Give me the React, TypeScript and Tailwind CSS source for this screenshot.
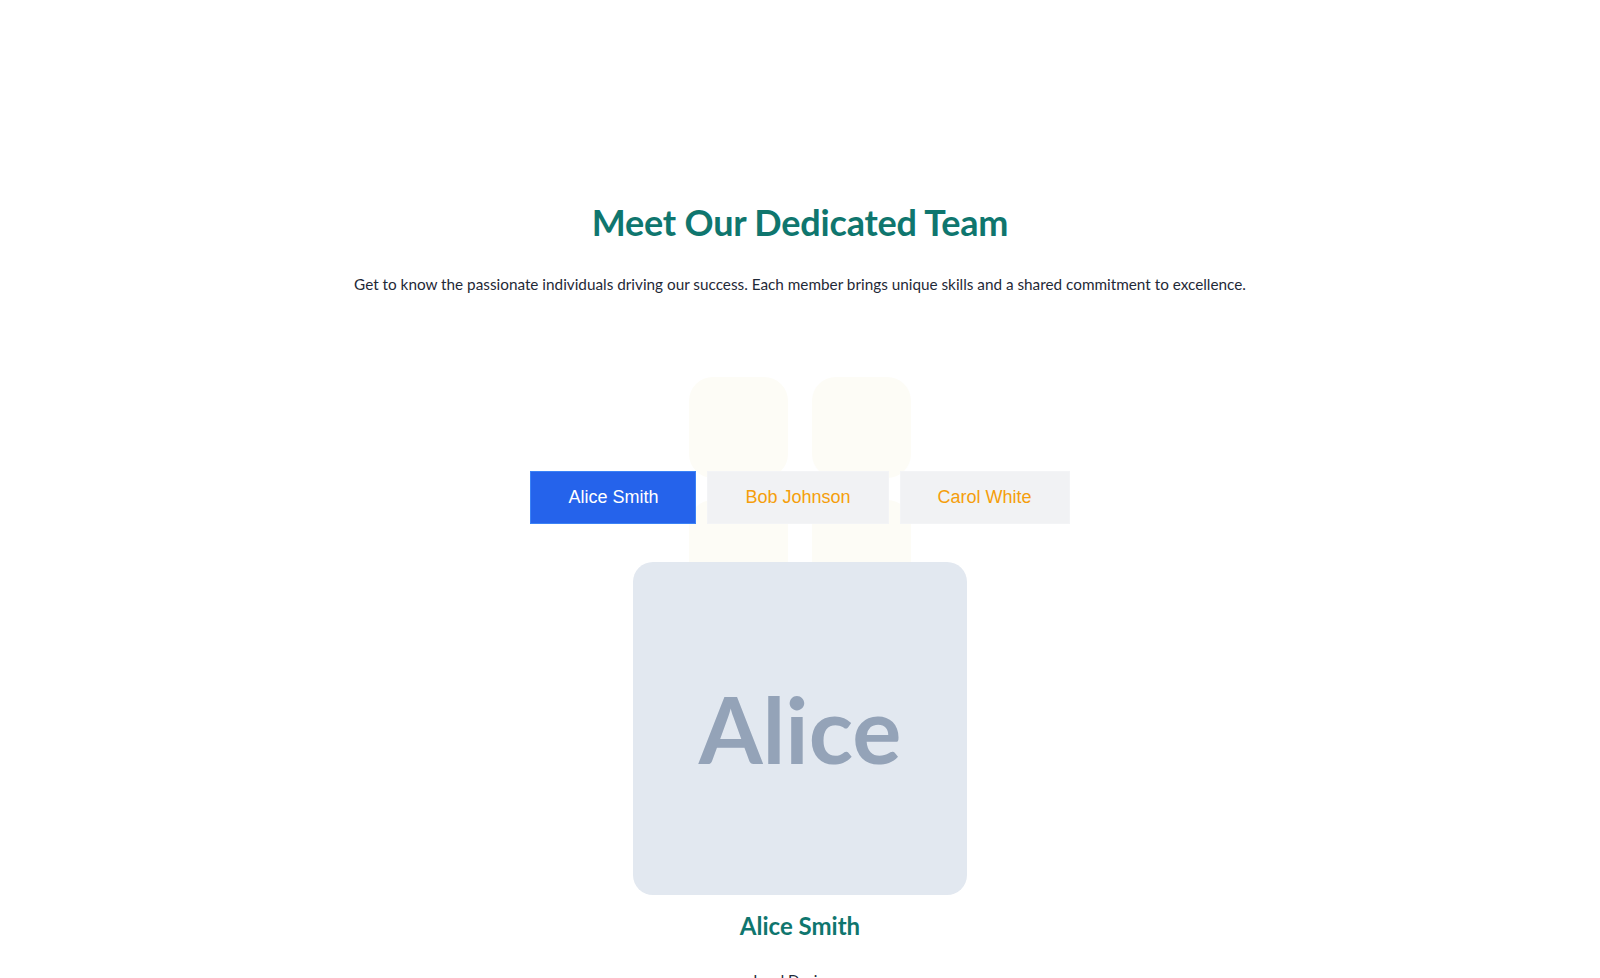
import { useState } from 'react';

const members = [
  { id: 'alice', name: 'Alice Smith', first: 'Alice', role: 'Lead Designer' },
  { id: 'bob', name: 'Bob Johnson', first: 'Bob', role: 'Senior Developer' },
  { id: 'carol', name: 'Carol White', first: 'Carol', role: 'Product Manager' },
];

export default function App() {
  const [active, setActive] = useState('alice');
  const member = members.find((m) => m.id === active) ?? members[0];

  return (
    <div className="min-h-screen bg-white font-['Lato','Noto_Sans',sans-serif] text-[#1f2937]">
      <section className="flex flex-col items-center pt-[200px]">
        <h1 className="text-[36px] leading-[44px] font-bold tracking-[-0.2px] text-[#0f766e]">
          Meet Our Dedicated Team
        </h1>
        <p className="mt-[28px] text-[15.3px] leading-[24px] text-[#1f2937]">
          Get to know the passionate individuals driving our success. Each member brings unique skills and a shared
          commitment to excellence.
        </p>

        <div className="relative mt-[175px]">
          {/* faint placeholder shapes behind the tabs */}
          <div className="absolute top-[-94px] left-1/2 -translate-x-1/2 flex gap-6">
            {[0, 1].map((i) => (
              <div key={i} className="flex flex-col gap-[22px]">
                <div className="w-[99px] h-[101px] rounded-3xl bg-[#fdfcf6]" />
                <div className="w-[99px] h-[101px] rounded-3xl bg-[#fdfcf6]" />
              </div>
            ))}
          </div>
          <div className="relative z-10 flex gap-[11px] font-['Liberation_Sans',Arial,sans-serif]">
            {members.map((m) => {
              const on = m.id === active;
              return (
                <button
                  key={m.id}
                  onClick={() => setActive(m.id)}
                  className={
                    on
                      ? 'h-[53px] px-[37px] text-[18px] border border-[#3b82f6] bg-[#2563eb] text-white'
                      : 'h-[53px] px-[37px] text-[18px] border border-[#f3f4f6] bg-[#f1f2f4] text-[#f59e0b]'
                  }
                >
                  {m.name}
                </button>
              );
            })}
          </div>
        </div>

        <div className="relative z-10 mt-[38px] w-[334px] h-[333px] rounded-[20px] bg-[#e2e8f0] flex items-center justify-center">
          <span className="text-[92px] leading-none font-bold text-[#94a3b8] font-['Lato',sans-serif]">
            {member.first}
          </span>
        </div>

        <h3 className="mt-[15px] text-[24px] leading-[32px] font-bold text-[#0f766e]">{member.name}</h3>
        <p className="mt-[26px] text-[15px] leading-[24px] text-[#1f2937]">{member.role}</p>
      </section>
    </div>
  );
}
